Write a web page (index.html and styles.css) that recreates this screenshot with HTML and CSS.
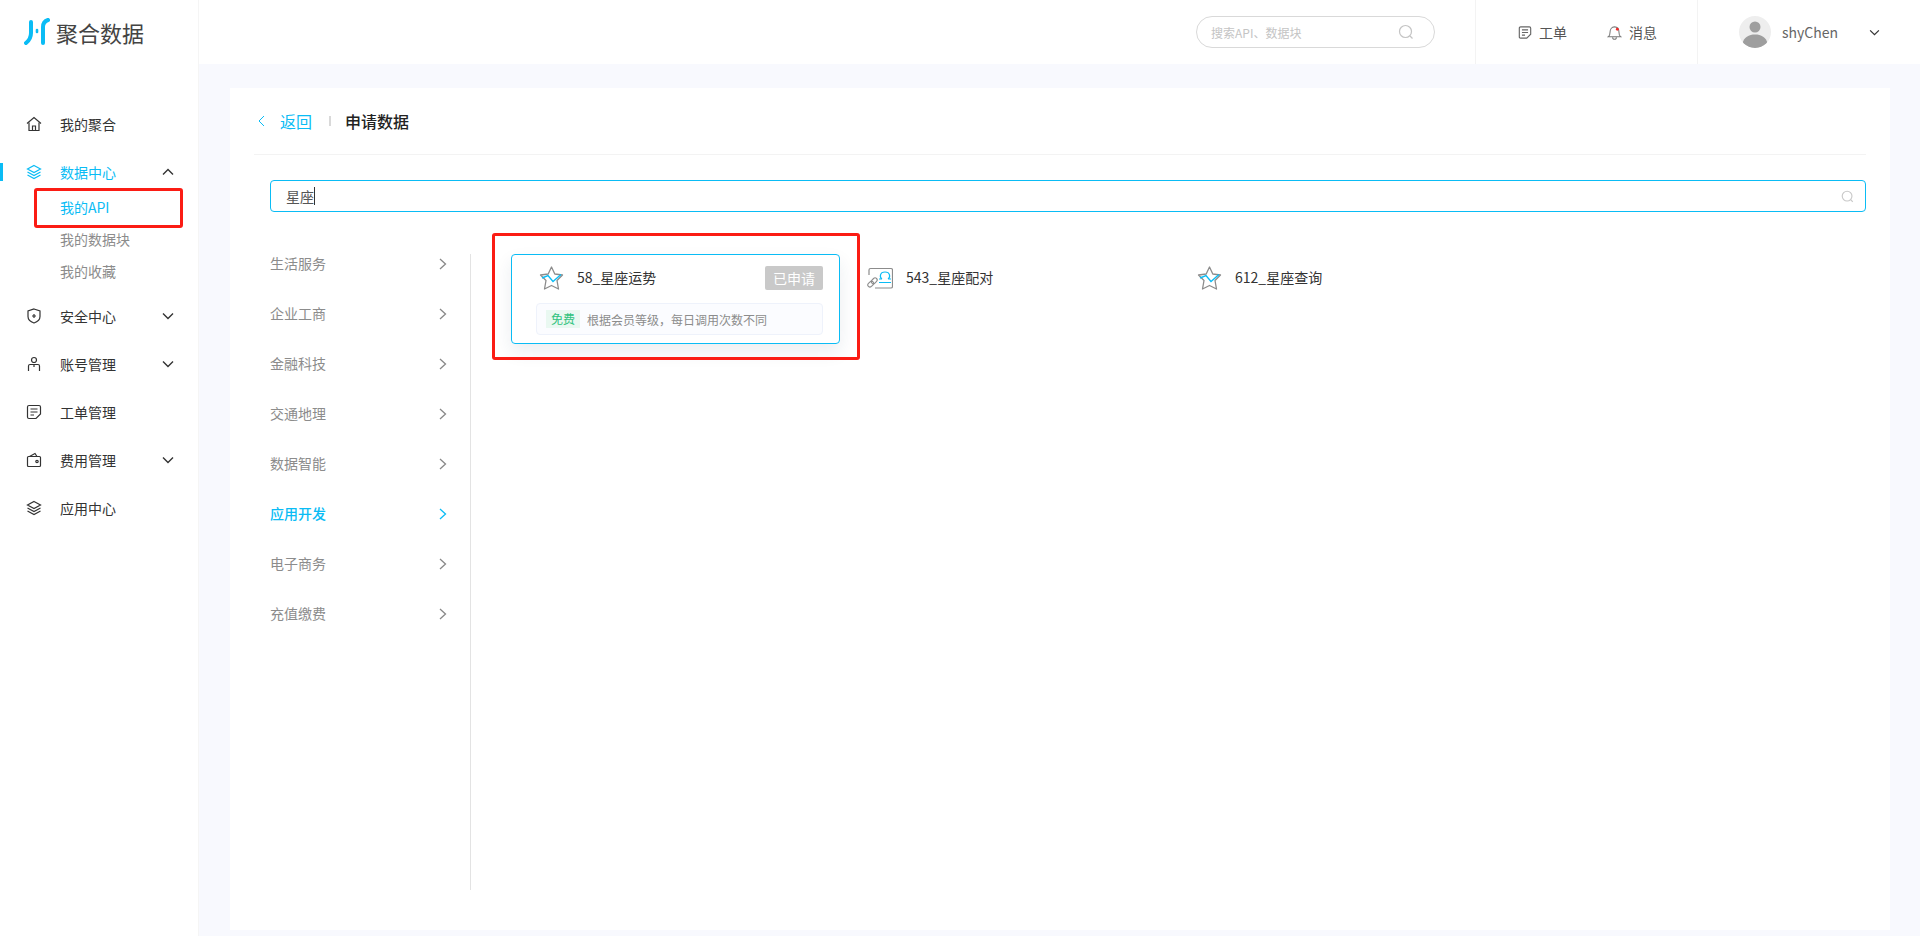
FILE: index.html
```html
<!DOCTYPE html>
<html lang="zh-CN">
<head>
    <meta charset="UTF-8">
    <meta name="viewport" content="width=device-width, initial-scale=1.0">
    <title>申请数据</title>
    <link rel="stylesheet" href="styles.css">
</head>
<body>
    <div class="page">
        <aside class="sidebar">
            <div class="logo">
                <svg class="logo-mark" width="26" height="28" viewBox="0 0 26 28" fill="none" stroke="#0abcf5" stroke-width="4" stroke-linecap="round">
                    <path d="M7 4V15C7 20 4.500 23 2 25"/>
                    <path d="M13 12V14" stroke-width="2.600"/>
                    <path d="M19 25V9C19 5 21 3 24 2"/>
                </svg>
                <span class="logo-text">聚合数据</span>
            </div>
            <nav class="menu">
                <div class="menu-item">
                    <svg class="menu-icon" width="16" height="16" viewBox="0 0 16 16" fill="none" stroke="#333" stroke-width="1.2">
                        <path d="M1 7.5L8 1.5L15 7.5"/><path d="M3 6.5V14.5H13V6.5"/><path d="M6.5 14.5V10H9.5V14.5"/>
                    </svg>
                    <span>我的聚合</span>
                </div>
                <div class="menu-item active">
                    <svg class="menu-icon" width="16" height="16" viewBox="0 0 16 16" fill="none" stroke="#0abcf5" stroke-width="1.2">
                        <path d="M8 1.5L14.5 5L8 8.5L1.5 5Z"/><path d="M1.5 8L8 11.5L14.5 8"/><path d="M1.5 11L8 14.5L14.5 11"/>
                    </svg>
                    <span>数据中心</span>
                    <svg class="menu-arrow" width="12" height="8" viewBox="0 0 12 8" fill="none" stroke="#333" stroke-width="1.4"><path d="M1 6.5L6 1.5L11 6.5"/></svg>
                </div>
                <div class="submenu">
                    <div class="sub-item current">我的API</div>
                    <div class="sub-item">我的数据块</div>
                    <div class="sub-item">我的收藏</div>
                </div>
                <div class="menu-item">
                    <svg class="menu-icon" width="16" height="16" viewBox="0 0 16 16" fill="none" stroke="#333" stroke-width="1.2">
                        <path d="M8 1L14 3V8.5C14 11.5 11 14 8 15C5 14 2 11.5 2 8.5V3Z"/><path d="M8 6V10M6 8H10"/>
                    </svg>
                    <span>安全中心</span>
                    <svg class="menu-arrow" width="12" height="8" viewBox="0 0 12 8" fill="none" stroke="#333" stroke-width="1.4"><path d="M1 1.5L6 6.5L11 1.5"/></svg>
                </div>
                <div class="menu-item">
                    <svg class="menu-icon" width="16" height="16" viewBox="0 0 16 16" fill="none" stroke="#333" stroke-width="1.2">
                        <circle cx="8" cy="4" r="2.5"/><path d="M2.5 15V10C2.5 8.8 3.3 8.5 4 8.5H12C12.8 8.5 13.5 8.8 13.5 10V15"/><path d="M8 8.5V11"/>
                    </svg>
                    <span>账号管理</span>
                    <svg class="menu-arrow" width="12" height="8" viewBox="0 0 12 8" fill="none" stroke="#333" stroke-width="1.4"><path d="M1 1.5L6 6.5L11 1.5"/></svg>
                </div>
                <div class="menu-item">
                    <svg class="menu-icon" width="16" height="16" viewBox="0 0 16 16" fill="none" stroke="#333" stroke-width="1.2">
                        <path d="M10 14.5H3C2 14.5 1.5 14 1.5 13V3C1.5 2 2 1.5 3 1.5H13C14 1.5 14.5 2 14.5 3V10L10 14.5Z"/><path d="M4.5 5H11.5M4.5 8H11.5M4.5 11H8"/>
                    </svg>
                    <span>工单管理</span>
                </div>
                <div class="menu-item">
                    <svg class="menu-icon" width="16" height="16" viewBox="0 0 16 16" fill="none" stroke="#333" stroke-width="1.2">
                        <rect x="1.5" y="4.5" width="13" height="10" rx="1"/><path d="M3.5 4.5L9 1.5L11 4.5"/><circle cx="11" cy="9.5" r="1.2"/>
                    </svg>
                    <span>费用管理</span>
                    <svg class="menu-arrow" width="12" height="8" viewBox="0 0 12 8" fill="none" stroke="#333" stroke-width="1.4"><path d="M1 1.5L6 6.5L11 1.5"/></svg>
                </div>
                <div class="menu-item">
                    <svg class="menu-icon" width="16" height="16" viewBox="0 0 16 16" fill="none" stroke="#333" stroke-width="1.2">
                        <path d="M8 1.5L14.5 5L8 8.5L1.5 5Z"/><path d="M1.5 8L8 11.5L14.5 8"/><path d="M1.5 11L8 14.5L14.5 11"/>
                    </svg>
                    <span>应用中心</span>
                </div>
            </nav>
        </aside>

        <div class="content">
            <header class="topbar">
                <div class="top-search">
                    <span>搜索API、数据块</span>
                    <svg width="16" height="16" viewBox="0 0 16 16" fill="none" stroke="#c4c4c4" stroke-width="1.2"><circle cx="7.5" cy="7.5" r="6"/><path d="M12 12L14.5 14.5"/></svg>
                </div>
                <div class="top-links">
                    <div class="top-link">
                        <svg width="14" height="15" viewBox="0 0 16 16" fill="none" stroke="#666" stroke-width="1.3">
                            <path d="M10 14.5H3C2 14.5 1.5 14 1.5 13V3C1.5 2 2 1.5 3 1.5H13C14 1.5 14.5 2 14.5 3V10L10 14.5Z"/><path d="M4.5 5H11.5M4.5 8H11.5M4.5 11H8"/>
                        </svg>
                        <span>工单</span>
                    </div>
                    <div class="top-link">
                        <svg width="15" height="15" viewBox="0 0 16 16" fill="none" stroke="#777" stroke-width="1.1">
                            <path d="M1.5 12.5C3 11.5 3.2 10 3.2 8C3.2 4.5 5 2 8 2C11 2 12.8 4.5 12.8 8C12.8 10 13 11.5 14.5 12.5Z"/><path d="M6 13C6 14.5 7 15.2 8 15.2C9 15.2 10 14.5 10 13"/><circle cx="11" cy="4.5" r="1.5" fill="#f02b2b" stroke="none"/>
                        </svg>
                        <span>消息</span>
                    </div>
                </div>
                <div class="user">
                    <div class="avatar">
                        <svg width="32" height="32" viewBox="0 0 32 32"><circle cx="16" cy="11" r="5.5" fill="#9e9e9e"/><path d="M3.5 28C4.5 21 10 18.5 16 18.5C22 18.5 27.5 21 28.5 28C25 30.5 21 32 16 32C11 32 7 30.5 3.5 28Z" fill="#9e9e9e"/></svg>
                    </div>
                    <span class="user-name">shyChen</span>
                    <svg class="user-arrow" width="11" height="7" viewBox="0 0 12 8" fill="none" stroke="#333" stroke-width="1.4"><path d="M1 1.5L6 6.5L11 1.5"/></svg>
                </div>
            </header>

            <main class="main">
                <div class="panel">
                    <div class="crumbs">
                        <svg width="8" height="12" viewBox="0 0 8 12" fill="none" stroke="#0abcf5" stroke-width="1"><path d="M7 1L2 6L7 11"/></svg>
                        <a class="back">返回</a>
                        <i class="crumb-sep"></i>
                        <h2>申请数据</h2>
                    </div>

                    <div class="search-box">
                        <span class="search-value">星座</span>
                        <svg width="13" height="13" viewBox="0 0 16 16" fill="none" stroke="#c9c9c9" stroke-width="1.4"><circle cx="7.5" cy="7.5" r="6"/><path d="M12 12L14.5 14.5"/></svg>
                    </div>

                    <div class="browse">
                        <ul class="cats">
                            <li>生活服务<svg width="8" height="12" viewBox="0 0 8 12" fill="none" stroke="#888" stroke-width="1.3"><path d="M1 1L6.5 6L1 11"/></svg></li>
                            <li>企业工商<svg width="8" height="12" viewBox="0 0 8 12" fill="none" stroke="#888" stroke-width="1.3"><path d="M1 1L6.5 6L1 11"/></svg></li>
                            <li>金融科技<svg width="8" height="12" viewBox="0 0 8 12" fill="none" stroke="#888" stroke-width="1.3"><path d="M1 1L6.5 6L1 11"/></svg></li>
                            <li>交通地理<svg width="8" height="12" viewBox="0 0 8 12" fill="none" stroke="#888" stroke-width="1.3"><path d="M1 1L6.5 6L1 11"/></svg></li>
                            <li>数据智能<svg width="8" height="12" viewBox="0 0 8 12" fill="none" stroke="#888" stroke-width="1.3"><path d="M1 1L6.5 6L1 11"/></svg></li>
                            <li class="on">应用开发<svg width="8" height="12" viewBox="0 0 8 12" fill="none" stroke="#0abcf5" stroke-width="1.3"><path d="M1 1L6.5 6L1 11"/></svg></li>
                            <li>电子商务<svg width="8" height="12" viewBox="0 0 8 12" fill="none" stroke="#888" stroke-width="1.3"><path d="M1 1L6.5 6L1 11"/></svg></li>
                            <li>充值缴费<svg width="8" height="12" viewBox="0 0 8 12" fill="none" stroke="#888" stroke-width="1.3"><path d="M1 1L6.5 6L1 11"/></svg></li>
                        </ul>

                        <div class="apis">
                            <div class="api hover">
                                <div class="api-head">
                                    <svg width="25" height="25" viewBox="0 0 25 25" fill="none">
                                        <path d="M12.5 1L15.8 8L23.5 9L18 14.5L19.5 23L12.5 19.5L5.5 23L7 14.5L1.5 9L9.2 8Z" stroke="#8c8c8c" stroke-width="1.3" stroke-linejoin="round"/>
                                        <path d="M3 12L9 9.5L14 15.5L22 8.5" stroke="#0abcf5" stroke-width="1.4"/>
                                    </svg>
                                    <span class="api-name">58_星座运势</span>
                                    <span class="api-tag">已申请</span>
                                </div>
                                <div class="api-note">
                                    <span class="free">免费</span>
                                    <span>根据会员等级，每日调用次数不同</span>
                                </div>
                            </div>
                            <div class="api">
                                <div class="api-head">
                                    <svg class="libra" width="26" height="22" viewBox="0 0 26 22" fill="none">
                                        <path d="M2 8V3C2 2 2.500 1.500 3.500 1.500H24C25 1.500 25.500 2 25.500 3V19.500C25.500 20.500 25 21 24 21H8" stroke="#8c8c8c" stroke-width="1.2"/>
                                        <path d="M15 12C12.500 10.500 12.500 5 18 5C23.500 5 23.500 10.500 21 12M12 12H15M21 12H24M12 15.500H24" stroke="#0abcf5" stroke-width="1.2"/>
                                        <rect x="0.500" y="15" width="6.500" height="4.200" rx="2.100" transform="rotate(-45 3.750 17.100)" stroke="#8c8c8c" stroke-width="1.100"/>
                                        <rect x="4" y="11.700" width="6.500" height="4.200" rx="2.100" transform="rotate(-45 7.250 13.800)" stroke="#8c8c8c" stroke-width="1.100"/>
                                    </svg>
                                    <span class="api-name">543_星座配对</span>
                                </div>
                            </div>
                            <div class="api">
                                <div class="api-head">
                                    <svg width="25" height="25" viewBox="0 0 25 25" fill="none">
                                        <path d="M12.5 1L15.8 8L23.5 9L18 14.5L19.5 23L12.5 19.5L5.5 23L7 14.5L1.5 9L9.2 8Z" stroke="#8c8c8c" stroke-width="1.3" stroke-linejoin="round"/>
                                        <path d="M3 12L9 9.5L14 15.5L22 8.5" stroke="#0abcf5" stroke-width="1.4"/>
                                    </svg>
                                    <span class="api-name">612_星座查询</span>
                                </div>
                            </div>
                        </div>
                    </div>
                </div>
            </main>
        </div>

        <!-- red marks drawn on top of the screenshot -->
        <div class="mark mark-menu"></div>
        <div class="mark mark-card"></div>
    </div>
</body>
</html>
```

FILE: styles.css
```css
* {
    box-sizing: border-box;
}

html, body {
    margin: 0;
    height: 100%;
    overflow: hidden;
}

body {
    font-family: "Noto Sans CJK SC", "Noto Sans", sans-serif;
    font-size: 14px;
    color: #333;
    background: #f8f9fe;
}

.page {
    position: relative;
    display: flex;
    height: 936px;
}

/* sidebar */
.sidebar {
    width: 199px;
    flex-shrink: 0;
    background: #fff;
    border-right: 1px solid #f5f5f5;
}

.logo {
    display: flex;
    align-items: center;
    height: 64px;
    padding-left: 24px;
    padding-bottom: 1px;
}

.logo-mark {
    margin-right: 6px;
}

.logo-text {
    font-size: 22px;
    line-height: 28px;
    color: #444;
}

.menu {
    padding-top: 36px;
}

.menu-item {
    position: relative;
    display: flex;
    align-items: center;
    height: 48px;
    padding-left: 26px;
    color: #333;
}

.menu-icon {
    margin-right: 18px;
}

.menu-arrow {
    position: absolute;
    left: 162px;
    top: 20px;
}

.menu-item.active {
    color: #0abcf5;
}

.menu-item.active::before {
    content: "";
    position: absolute;
    left: 0;
    top: 15px;
    width: 3px;
    height: 18px;
    background: #0abcf5;
}

.submenu {
    margin-top: -5px;
    margin-bottom: 5px;
}

.sub-item {
    height: 32px;
    line-height: 32px;
    padding-left: 60px;
    color: #8c8c8c;
}

.sub-item.current {
    color: #0abcf5;
}

/* top bar */
.content {
    flex: 1;
    min-width: 0;
}

.topbar {
    display: flex;
    align-items: center;
    justify-content: flex-end;
    height: 64px;
    background: #fff;
}

.top-search {
    display: flex;
    align-items: center;
    justify-content: space-between;
    width: 239px;
    height: 32px;
    margin-right: 40px;
    padding: 0 20px 0 14px;
    border: 1px solid #d9d9d9;
    border-radius: 16px;
    font-size: 12px;
    color: #c4c4c4;
}

.top-links {
    display: flex;
    align-items: center;
    gap: 40px;
    width: 223px;
    height: 64px;
    padding-left: 42px;
    border-left: 1px solid #f3f3f3;
    border-right: 1px solid #f3f3f3;
}

.top-link {
    display: flex;
    align-items: center;
    flex-shrink: 0;
    gap: 7px;
    white-space: nowrap;
    color: #555;
}

.user {
    display: flex;
    align-items: center;
    width: 222px;
    padding-left: 41px;
}

.avatar {
    width: 32px;
    height: 32px;
    border-radius: 50%;
    overflow: hidden;
    background: #eee;
}

.avatar svg {
    display: block;
}

.user-name {
    margin-left: 11px;
    color: #666;
}

.user-arrow {
    margin-left: 31px;
}

/* main panel */
.main {
    padding: 24px 30px 6px 31px;
}

.panel {
    height: 842px;
    padding: 0 24px;
    background: #fff;
}

.crumbs {
    display: flex;
    align-items: center;
    height: 67px;
    padding-left: 3px;
    border-bottom: 1px solid #f3f3f3;
}

.back {
    margin-left: 15px;
    font-size: 16px;
    color: #0abcf5;
}

.crumb-sep {
    width: 2px;
    height: 10px;
    margin: 0 14px 0 17px;
    background: #d9d9d9;
}

.crumbs h2 {
    margin: 0;
    font-size: 16px;
    font-weight: 500;
    color: #222;
}

.search-box {
    display: flex;
    align-items: center;
    justify-content: space-between;
    height: 32px;
    margin: 25px 0 0 16px;
    padding: 0 11px 0 15px;
    border: 1px solid #0abcf5;
    border-radius: 4px;
    color: #555;
}

.search-value {
    border-right: 1px solid #333;
    line-height: 18px;
}

.browse {
    display: flex;
    margin: 42px 0 0 16px;
}

/* category list */
.cats {
    width: 201px;
    height: 636px;
    margin: 0;
    padding: 0;
    list-style: none;
    border-right: 1px solid #e3e3e3;
}

.cats li {
    display: flex;
    align-items: center;
    justify-content: space-between;
    height: 50px;
    margin-top: -16px;
    margin-bottom: 16px;
    padding-right: 23px;
    color: #8c8c8c;
}

.cats li svg {
    margin-top: 2px;
}

.cats li.on {
    color: #0abcf5;
    font-weight: 500;
}

/* api cards */
.apis {
    display: grid;
    grid-template-columns: repeat(3, 329px);
    align-content: start;
    margin-left: 40px;
}

.api {
    height: 90px;
    padding: 11px 16px 0 27px;
    border: 1px solid transparent;
    border-radius: 4px;
}

.api.hover {
    border-color: #0abcf5;
    box-shadow: 0 8px 18px rgba(30, 60, 90, 0.09);
}

.api-head {
    display: flex;
    align-items: center;
    height: 24px;
}

.libra {
    margin-left: -1px;
}

.api-name {
    flex: 1;
    margin-left: 13px;
    margin-bottom: 2px;
    color: #333;
}

.api-tag {
    width: 58px;
    height: 24px;
    line-height: 24px;
    text-align: center;
    border-radius: 2px;
    background: #c9c9c9;
    color: #fff;
}

.api-note {
    display: flex;
    align-items: center;
    gap: 7px;
    height: 32px;
    margin: 13px 0 0 -3px;
    padding-left: 9px;
    border: 1px solid #eef2fb;
    border-radius: 4px;
    background: #fbfcff;
    font-size: 12px;
    color: #8c8c8c;
}

.free {
    padding: 0 5px;
    height: 18px;
    line-height: 18px;
    background: #e9f8f1;
    color: #2fc27d;
}

/* red annotation boxes */
.mark {
    position: absolute;
    border: 3px solid #fb1c14;
    border-radius: 3px;
}

.mark-menu {
    left: 34px;
    top: 188px;
    width: 149px;
    height: 40px;
}

.mark-card {
    left: 492px;
    top: 233px;
    width: 368px;
    height: 127px;
}
```
